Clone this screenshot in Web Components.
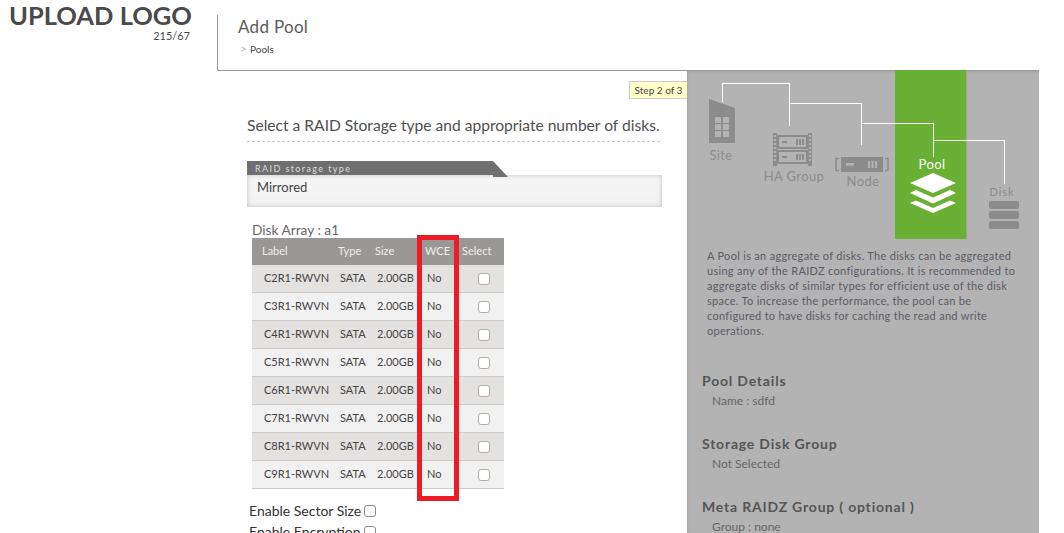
<!DOCTYPE html>
<html>
<head>
<meta charset="utf-8">
<title>Add Pool</title>
<style>
  html, body { margin: 0; height: 533px; overflow: hidden; background: #fff; }
  body { font-family: 'Lato', 'Open Sans', sans-serif; color: #555; }
</style>
</head>
<body>
<template id="t-shell">
  <style>
    :host { display: grid; grid-template-columns: 217px 470px 352px; grid-template-rows: 71px 462px; width: 1039px; height: 533px; overflow: hidden; }
    .logo { grid-row: 1; grid-column: 1; }
    .head { grid-row: 1; grid-column: 2 / 4; }
    .main { grid-row: 2; grid-column: 2; min-width: 0; }
    .side { grid-row: 2; grid-column: 3; min-width: 0; margin-top: -1px; }
  </style>
  <div class="logo"><slot name="logo"></slot></div>
  <div class="head"><slot name="head"></slot></div>
  <div class="main"><slot name="main"></slot></div>
  <div class="side"><slot name="side"></slot></div>
</template>

<template id="t-logo">
  <style>
    :host { display: flex; flex-direction: column; align-items: flex-end; padding: 0 27px 0 9px; color: #4a4a4a; }
    .big { font-size: 25.5px; line-height: 31px; font-weight: 700; align-self: flex-start; white-space: nowrap; }
    .small { font-size: 11px; line-height: 12px; margin-top: -1px; }
  </style>
  <div class="big">UPLOAD LOGO</div>
  <div class="small">215/67</div>
</template>

<template id="t-head">
  <style>
    :host { display: block; height: 71px; box-sizing: border-box; padding-top: 15px; }
    .box { height: 56px; box-sizing: border-box; border-left: 1px solid #999; border-bottom: 1px solid #999; padding: 2px 0 0 20px; }
    h1 { margin: 0; font-size: 17px; line-height: 20px; font-weight: 400; color: #5a5a5a; letter-spacing: .3px; }
    .crumb { margin-top: 6px; font-size: 10px; line-height: 12px; color: #444; display: flex; gap: 3px; padding-left: 2px; }
    .crumb span { color: #bbb; font-size: 12px; }
  </style>
  <div class="box">
    <h1>Add Pool</h1>
    <div class="crumb"><span>&gt;</span>Pools</div>
  </div>
</template>

<template id="t-step">
  <style>
    :host { display: flex; justify-content: flex-end; height: 18px; }
    div { box-sizing: border-box; width: 58px; height: 18px; background: #ffffcc; border: 1px solid #ccc; border-right: 0; font-size: 10px; line-height: 16px; color: #444; text-align: center; white-space: nowrap; }
  </style>
  <div><slot></slot></div>
</template>

<template id="t-raid">
  <style>
    :host { display: block; width: 415px; }
    .tab { position: relative; height: 14px; width: 246px; background: #6f6f6f; color: #ddd; font-size: 9px; line-height: 15px; letter-spacing: 1.4px; padding-left: 8px; box-sizing: border-box; white-space: nowrap; }
    .tab::after { content: ""; position: absolute; left: 246px; top: 0; border-top: 16px solid transparent; border-left: 15px solid #6f6f6f; }
    .val { height: 32px; box-sizing: border-box; background: linear-gradient(#f6f6f6, #f1f1f1); box-shadow: inset 0 0 5px #c4c4c4; padding: 4px 10px; font-size: 13px; line-height: 17px; color: #444; }
  </style>
  <div class="tab">RAID storage type</div>
  <div class="val"><slot></slot></div>
</template>

<template id="t-disks">
  <style>
    :host { display: block; position: relative; width: 252px; font-size: 11px; color: #444; }
    table { border-collapse: collapse; table-layout: fixed; width: 252px; }
    th { height: 25px; padding: 0 0 2px 2px; background: #999896; color: #eee; font-weight: 400; text-align: left; font-size: 11px; }
    th:first-child { padding-left: 10px; }
    td { height: 25px; padding: 0 0 2px 4px; border-bottom: 1px solid #ccc; white-space: nowrap; }
    td:first-child { padding-left: 12px; }
    tr:nth-child(odd) td { background: #e3e2e0; }
    tr:nth-child(even) td { background: #f1f1f1; }
    td.sel { padding: 0 0 0 18px; height: 27px; }
    .cb { display: block; width: 12px; height: 12px; box-sizing: border-box; border: 1px solid #b5aca2; border-radius: 3px; background: #fff; }
    .mark { position: absolute; left: 165px; top: -3px; width: 42px; height: 266px; box-sizing: border-box; border: 5px solid #ed1c24; }
  </style>
  <table>
    <colgroup><col style="width:84px"><col style="width:37px"><col style="width:50px"><col style="width:37px"><col style="width:44px"></colgroup>
    <thead><tr><th>Label</th><th>Type</th><th>Size</th><th>WCE</th><th>Select</th></tr></thead>
    <tbody></tbody>
  </table>
  <div class="mark"></div>
</template>

<template id="t-opt">
  <style>
    :host { display: flex; align-items: center; gap: 3px; height: 21px; font-size: 14px; color: #333; }
    i { display: block; width: 12px; height: 12px; box-sizing: border-box; border: 1px solid #8f8a85; border-radius: 3px; background: #fff; margin-top: 1px; }
  </style>
  <slot></slot><i></i>
</template>

<template id="t-diagram">
  <style>
    :host { display: block; position: relative; height: 169px; overflow: hidden; }
    .pool { position: absolute; left: 208px; top: 0; width: 71px; height: 169px; background: #6ab034; box-shadow: 1px 0 1px #a5a5a5; }
    svg { position: absolute; left: 0; top: 0; }
    .l { position: absolute; transform: translateX(-50%); color: #8c8c8c; white-space: nowrap; line-height: 16px; letter-spacing: .4px; }
  </style>
  <div class="pool"></div>
  <svg width="352" height="169" viewBox="687 70 352 169">
    <g fill="none" stroke="#fff" stroke-width="1" shape-rendering="crispEdges">
      <path d="M722.5 102V83.5H789.5V126"/>
      <path d="M789.5 103.5H861.5V145"/>
      <path d="M861.5 123.5H933.5V157"/>
      <path d="M933.5 140.5H1004.5V184"/>
    </g>
    <!-- site -->
    <path d="M709 99L735 108V143H709Z" fill="#8c8c8c"/>
    <g fill="#b3b3b3">
      <rect x="715" y="117" width="6" height="6"/><rect x="723" y="117" width="6" height="6"/>
      <rect x="715" y="124" width="6" height="6"/><rect x="723" y="124" width="6" height="6"/>
      <rect x="715" y="131" width="6" height="6"/><rect x="723" y="131" width="6" height="6"/>
    </g>
    <!-- ha group -->
    <g fill="#8c8c8c">
      <path fill-rule="evenodd" d="M773 133h4v33h-4zM808 133h4v33h-4z"/>
      <rect x="777" y="135" width="31" height="14"/>
      <rect x="777" y="150" width="31" height="14"/>
    </g>
    <g fill="#b3b3b3">
      <rect x="773.8" y="135" width="2.4" height="2"/><rect x="773.8" y="139" width="2.4" height="2"/><rect x="773.8" y="143" width="2.4" height="2"/><rect x="773.8" y="147" width="2.4" height="2"/><rect x="773.8" y="151" width="2.4" height="2"/><rect x="773.8" y="155" width="2.4" height="2"/><rect x="773.8" y="159" width="2.4" height="2"/>
      <rect x="808.8" y="135" width="2.4" height="2"/><rect x="808.8" y="139" width="2.4" height="2"/><rect x="808.8" y="143" width="2.4" height="2"/><rect x="808.8" y="147" width="2.4" height="2"/><rect x="808.8" y="151" width="2.4" height="2"/><rect x="808.8" y="155" width="2.4" height="2"/><rect x="808.8" y="159" width="2.4" height="2"/>
      <rect x="779" y="137" width="27" height="10"/>
      <rect x="779" y="152" width="27" height="10"/>
    </g>
    <g fill="#8c8c8c">
      <rect x="782" y="141" width="5" height="2"/><rect x="796" y="139" width="2" height="6"/><rect x="799" y="139" width="2" height="6"/><rect x="802" y="139" width="2" height="6"/>
      <rect x="782" y="156" width="5" height="2"/><rect x="796" y="154" width="2" height="6"/><rect x="799" y="154" width="2" height="6"/><rect x="802" y="154" width="2" height="6"/>
    </g>
    <!-- node -->
    <rect x="841" y="157" width="42" height="15" fill="#8c8c8c"/>
    <path d="M839 158.5H836V170.5H839M885 158.5H888V170.5H885" fill="none" stroke="#8c8c8c" stroke-width="1.6"/>
    <g fill="#b3b3b3">
      <rect x="846" y="163" width="8" height="2.5"/><rect x="868" y="161" width="2" height="7"/><rect x="871.5" y="161" width="2" height="7"/><rect x="875" y="161" width="2" height="7"/>
    </g>
    <!-- pool layers -->
    <g fill="#fff">
      <path d="M933 173L956 183L933 193L910 183Z"/>
      <path d="M916 190L933 197.5L950 190L956 193L933 203.5L910 193Z"/>
      <path d="M916 200.5L933 208L950 200.5L956 203L933 213L910 203Z"/>
    </g>
    <!-- disk -->
    <g fill="#8c8c8c">
      <rect x="989" y="201" width="30" height="8" rx="2"/>
      <rect x="989" y="211" width="30" height="8" rx="2"/>
      <rect x="989" y="221" width="30" height="8" rx="2"/>
    </g>
  </svg>
  <div class="l" style="left:34px;top:77px;font-size:13px">Site</div>
  <div class="l" style="left:107px;top:98px;font-size:13px">HA Group</div>
  <div class="l" style="left:176px;top:103px;font-size:13px">Node</div>
  <div class="l" style="left:245px;top:86px;font-size:13px;color:#fff">Pool</div>
  <div class="l" style="left:315px;top:114px;font-size:11px;letter-spacing:1px">Disk</div>
</template>

<template id="t-detail">
  <style>
    :host { display: block; height: 63px; padding-left: 15px; }
    h3 { margin: 0; font-size: 14px; line-height: 20px; font-weight: 700; letter-spacing: .8px; color: #555; white-space: nowrap; }
    p { margin: 0; padding: 0 0 0 10px; font-size: 12px; line-height: 20px; color: #666; }
  </style>
  <h3></h3>
  <p><slot></slot></p>
</template>

<template id="t-side">
  <style>
    :host { display: block; height: 463px; background: #b3b3b3; box-shadow: inset 0 3px 3px -2px #8f8f8f, inset 2px 0 2px -1px #a8a8a8; overflow: hidden; }
    .desc { margin: 9px 0 0; padding: 0 20px; font-size: 11px; letter-spacing: .3px; line-height: 15px; color: #5c5c66; }
    .details { margin-top: 33px; }
  </style>
  <pool-diagram></pool-diagram>
  <p class="desc"><slot name="desc"></slot></p>
  <div class="details"><slot></slot></div>
</template>

<template id="t-main">
  <style>
    :host { display: block; height: 462px; overflow: hidden; }
    .step { padding-top: 10px; }
    h2 { margin: 19px 0 0 30px; width: 413px; height: 24px; box-sizing: border-box; font-size: 15.6px; line-height: 14px; font-weight: 400; color: #4f4f4f; white-space: nowrap; border-bottom: 1px dashed #ccc; }
    .raid { margin: 19px 0 0 30px; }
    .array { margin: 15px 0 0 35px; font-size: 13.7px; line-height: 16px; color: #666; }
    .tbl { margin: 0 0 0 35px; }
    .opts { margin: 11px 0 0 32px; }
  </style>
  <div class="step"><step-tip>Step 2 of 3</step-tip></div>
  <h2>Select a RAID Storage type and appropriate number of disks.</h2>
  <div class="raid"><raid-type>Mirrored</raid-type></div>
  <div class="array">Disk Array : a1</div>
  <div class="tbl"><disk-table></disk-table></div>
  <div class="opts">
    <opt-check>Enable Sector Size</opt-check>
    <opt-check>Enable Encryption</opt-check>
  </div>
</template>

<app-shell>
  <upload-logo slot="logo"></upload-logo>
  <page-head slot="head"></page-head>
  <pool-main slot="main"></pool-main>
  <pool-side slot="side">
    <span slot="desc">A Pool is an aggregate of disks. The disks can be aggregated using any of the RAIDZ configurations. It is recommended to aggregate disks of similar types for efficient use of the disk space. To increase the performance, the pool can be configured to have disks for caching the read and write operations.</span>
    <pool-detail title="Pool Details">Name : sdfd</pool-detail>
    <pool-detail title="Storage Disk Group">Not Selected</pool-detail>
    <pool-detail title="Meta RAIDZ Group ( optional )">Group : none</pool-detail>
  </pool-side>
</app-shell>

<script>
  function simple(tag, tpl, setup) {
    customElements.define(tag, class extends HTMLElement {
      constructor() {
        super();
        this.attachShadow({ mode: 'open' });
        this.shadowRoot.appendChild(document.getElementById(tpl).content.cloneNode(true));
      }
      connectedCallback() {
        if (setup) setup(this);
      }
    });
  }

  const DISKS = ['C2R1', 'C3R1', 'C4R1', 'C5R1', 'C6R1', 'C7R1', 'C8R1', 'C9R1'];

  simple('app-shell', 't-shell');
  simple('upload-logo', 't-logo');
  simple('page-head', 't-head');
  simple('step-tip', 't-step');
  simple('raid-type', 't-raid');
  simple('opt-check', 't-opt');
  simple('pool-diagram', 't-diagram');
  simple('pool-side', 't-side');
  simple('pool-main', 't-main');
  simple('pool-detail', 't-detail', el => {
    el.shadowRoot.querySelector('h3').textContent = el.getAttribute('title');
  });
  simple('disk-table', 't-disks', el => {
    el.shadowRoot.querySelector('tbody').innerHTML = DISKS.map(d =>
      `<tr><td>${d}-RWVN</td><td>SATA</td><td>2.00GB</td><td>No</td><td class="sel"><span class="cb"></span></td></tr>`
    ).join('');
  });
</script>
</body>
</html>
